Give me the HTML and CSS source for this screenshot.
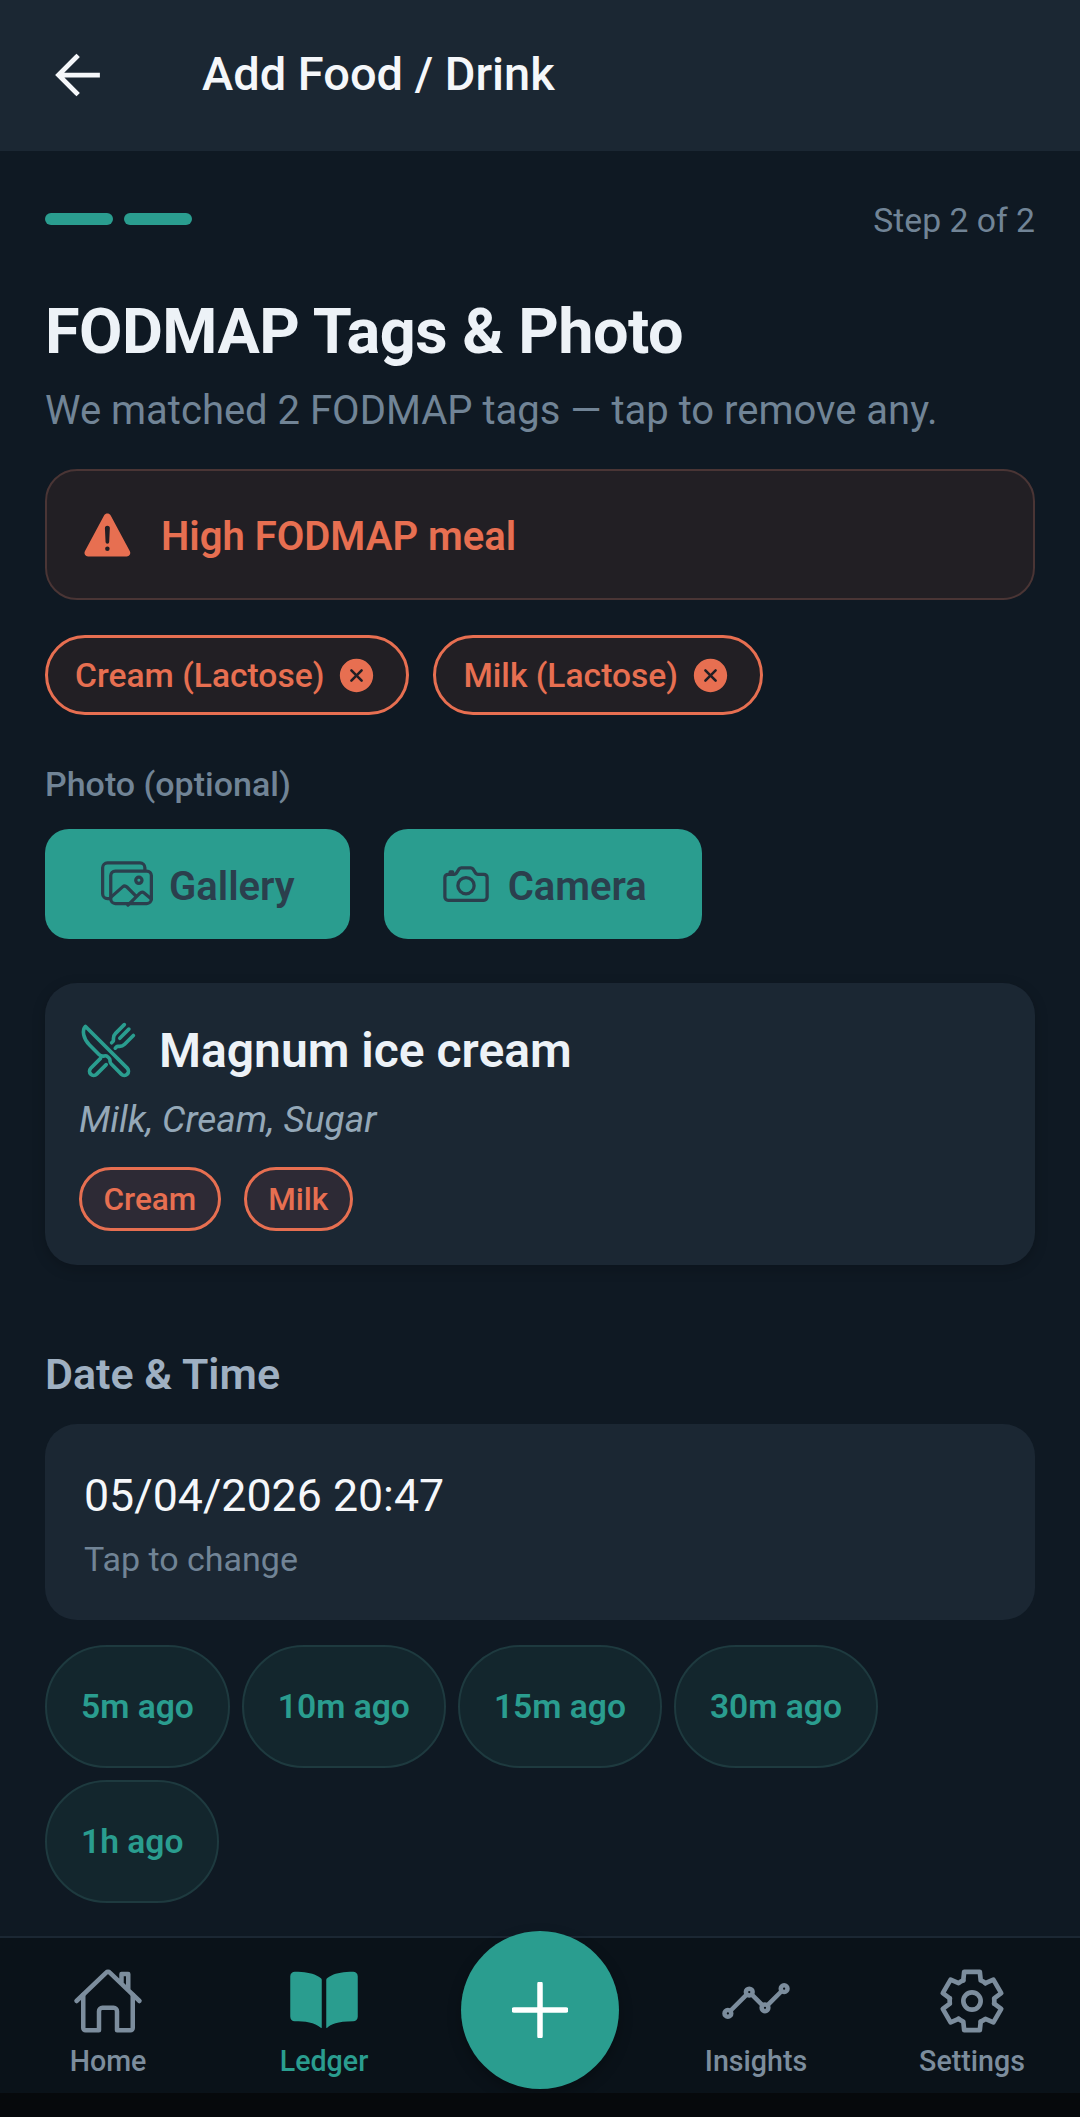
FILE: index.html
```html
<!DOCTYPE html>
<html lang="en">
<head>
    <meta charset="UTF-8">
    <meta name="viewport" content="width=device-width, initial-scale=1.0">
    <title>Add Food / Drink</title>
    <link rel="stylesheet" href="styles.css">
</head>
<body>
    <header class="topbar">
        <svg class="back-icon" viewBox="0 0 512 512"><path d="M244 400L100 256l144-144M120 256h292"/></svg>
        <h2>Add Food / Drink</h2>
    </header>

    <main class="content">
        <div class="progress-row">
            <div class="progress-bars"><span></span><span></span></div>
            <span class="step-text">Step 2 of 2</span>
        </div>

        <h1>FODMAP Tags &amp; Photo</h1>
        <p class="subtitle">We matched 2 FODMAP tags — tap to remove any.</p>

        <div class="alert">
            <svg class="alert-icon" viewBox="0 0 512 512"><path d="M449.07 399.08L278.64 82.58c-12.08-22.44-44.26-22.44-56.35 0L51.87 399.08A32 32 0 0080 446.25h340.89a32 32 0 0028.18-47.17zm-198.6-1.83a20 20 0 1120-20 20 20 0 01-20 20zm21.72-201.15l-5.74 122a16 16 0 01-32 0l-5.74-121.95a21.73 21.73 0 0121.5-22.69h.21a21.74 21.74 0 0121.73 22.7z"/></svg>
            <span>High FODMAP meal</span>
        </div>

        <div class="tag-row">
            <div class="tag">
                <span>Cream (Lactose)</span>
                <svg viewBox="0 0 512 512"><path d="M256 48C141.31 48 48 141.31 48 256s93.31 208 208 208 208-93.31 208-208S370.69 48 256 48zm75.31 260.69a16 16 0 11-22.62 22.62L256 278.63l-52.69 52.68a16 16 0 01-22.62-22.62L233.37 256l-52.68-52.69a16 16 0 0122.62-22.62L256 233.37l52.69-52.68a16 16 0 0122.62 22.62L278.63 256z"/></svg>
            </div>
            <div class="tag">
                <span>Milk (Lactose)</span>
                <svg viewBox="0 0 512 512"><path d="M256 48C141.31 48 48 141.31 48 256s93.31 208 208 208 208-93.31 208-208S370.69 48 256 48zm75.31 260.69a16 16 0 11-22.62 22.62L256 278.63l-52.69 52.68a16 16 0 01-22.62-22.62L233.37 256l-52.68-52.69a16 16 0 0122.62-22.62L256 233.37l52.69-52.68a16 16 0 0122.62 22.62L278.63 256z"/></svg>
            </div>
        </div>

        <div class="photo-label">Photo (optional)</div>
        <div class="photo-buttons">
            <button type="button">
                <svg viewBox="0 0 512 512"><path d="M432 112V96a48.14 48.14 0 00-48-48H64a48.14 48.14 0 00-48 48v256a48.14 48.14 0 0048 48h16"/><rect x="96" y="128" width="400" height="320" rx="45" ry="45"/><ellipse cx="372.92" cy="219.64" rx="30.77" ry="30.55"/><path d="M342.15 372.17L255 285.78a30.93 30.93 0 00-42.18-1.21L96 387.64M265.23 464l118.59-117.73a31 31 0 0141.46-1.87L496 402.91"/></svg>
                <span>Gallery</span>
            </button>
            <button type="button">
                <svg viewBox="0 0 512 512"><path d="M350.54 148.68l-26.62-42.06C318.31 100.08 310.62 96 302 96h-92c-8.62 0-16.31 4.08-21.92 10.62l-26.62 42.06C155.85 155.23 148.62 160 140 160H80a32 32 0 00-32 32v192a32 32 0 0032 32h352a32 32 0 0032-32V192a32 32 0 00-32-32h-59c-8.65 0-16.85-4.77-22.46-11.32z"/><circle cx="256" cy="272" r="80"/><path d="M124 158v-22h-24v22"/></svg>
                <span>Camera</span>
            </button>
        </div>

        <section class="food-card">
            <div class="food-head">
                <svg viewBox="0 0 512 512"><path d="M57.49 47.74l368.43 368.43a37.28 37.28 0 010 52.72h0a37.29 37.29 0 01-52.72 0l-90-91.55a32 32 0 01-9.2-22.43v-5.53a32 32 0 00-9.52-22.78l-11.62-10.73a32 32 0 00-29.8-7.44h0a48.53 48.53 0 01-46.56-12.63l-85.43-85.44C40.39 159.68 21.74 83.15 57.49 47.74z"/><path d="M400 32l-77.25 77.25A64 64 0 00304 154.51v14.86a16 16 0 01-4.69 11.32L288 192M320 240l11.31-11.31a16 16 0 0111.32-4.69h14.86a64 64 0 0045.26-18.75L480 128M440 72l-80 80M190 330l-86.49 86.49a37.28 37.28 0 000 52.72h0a37.29 37.29 0 0052.72 0L240 385"/></svg>
                <span>Magnum ice cream</span>
            </div>
            <p class="ingredients">Milk, Cream, Sugar</p>
            <div class="food-tags">
                <span>Cream</span>
                <span>Milk</span>
            </div>
        </section>

        <div class="section-title">Date &amp; Time</div>
        <div class="date-card">
            <div class="date-value">05/04/2026 20:47</div>
            <div class="date-hint">Tap to change</div>
        </div>

        <div class="quick-times">
            <span>5m ago</span>
            <span>10m ago</span>
            <span>15m ago</span>
            <span>30m ago</span>
            <span>1h ago</span>
        </div>
    </main>

    <nav class="bottom-nav">
        <a class="nav-item">
            <svg viewBox="0 0 512 512"><path d="M80 212v236a16 16 0 0016 16h96V328a24 24 0 0124-24h80a24 24 0 0124 24v136h96a16 16 0 0016-16V212"/><path d="M480 256L266.89 52c-5-5.28-16.69-5.34-21.78 0L32 256M400 179V64h-48v69"/></svg>
            Home
        </a>
        <a class="nav-item active">
            <svg viewBox="0 0 512 512"><path d="M202.24 74C166.11 56.75 115.61 48.3 48 48a31.36 31.36 0 00-17.92 5.33A32 32 0 0016 79.9v286c0 19.34 13.76 33.93 32 33.93 71.07 0 142.36 6.64 185.06 47a4.11 4.11 0 006.94-3V106.82a15.89 15.89 0 00-5.46-12A143 143 0 00202.24 74zM481.92 53.3A31.33 31.33 0 00464 48c-67.61.3-118.11 8.71-154.24 26a143.31 143.31 0 00-32.31 20.78 15.93 15.93 0 00-5.45 12v337.13a3.93 3.93 0 006.68 2.81c25.67-25.5 70.72-46.82 185.36-46.81a32 32 0 0032-32v-288a32 32 0 00-14.12-26.61z"/></svg>
            Ledger
        </a>
        <div class="fab">
            <svg viewBox="0 0 56 56"><path d="M28 2v52M2 28h52"/></svg>
        </div>
        <a class="nav-item">
            <svg viewBox="0 0 512 512"><path d="M344 280l88-88M232 216l64 64M80 320l104-104"/><circle cx="456" cy="168" r="24"/><circle cx="320" cy="304" r="24"/><circle cx="208" cy="192" r="24"/><circle cx="56" cy="344" r="24"/></svg>
            Insights
        </a>
        <a class="nav-item">
            <svg class="gear" viewBox="0 0 100 100">
                <path id="gearTooth" d="M37.89 21.46L39.13 9.43H60.87L62.11 21.46A31 31 0 0 1 68.66 25.24"/>
                <use href="#gearTooth" transform="rotate(60 50 50)"/>
                <use href="#gearTooth" transform="rotate(120 50 50)"/>
                <use href="#gearTooth" transform="rotate(180 50 50)"/>
                <use href="#gearTooth" transform="rotate(240 50 50)"/>
                <use href="#gearTooth" transform="rotate(300 50 50)"/>
                <circle cx="50" cy="50" r="12"/>
            </svg>
            Settings
        </a>
    </nav>
    <div class="system-strip"></div>
</body>
</html>
```

FILE: styles.css
```css
* {
    box-sizing: border-box;
}

body {
    font-family: 'Roboto', sans-serif;
    background-color: #0f1923;
    color: #edf2f7;
    display: flex;
    flex-direction: column;
    height: 2117px;
    margin: 0;
    overflow: hidden;
}

.topbar {
    height: 151px;
    flex-shrink: 0;
    background-color: #1b2733;
    display: flex;
    align-items: center;
    gap: 92px;
    padding: 0 0 4px 46px;
}

.topbar h2 {
    margin: 0;
    font-size: 47px;
    font-weight: 500;
    color: #f5f7fa;
}

.back-icon {
    width: 64px;
    height: 64px;
    margin-top: 2px;
    fill: none;
    stroke: #f5f7fa;
    stroke-width: 38;
    stroke-linecap: square;
}

.content {
    flex: 1;
    padding: 48px 45px 0;
}

.progress-row {
    display: flex;
    justify-content: space-between;
    align-items: center;
    height: 40px;
}

.progress-bars {
    display: flex;
    gap: 11px;
}

.progress-bars span {
    width: 68px;
    height: 12px;
    border-radius: 6px;
    background-color: #2a9d8f;
}

.step-text {
    font-size: 33.7px;
    padding-top: 2px;
    color: #718496;
}

h1 {
    margin: 55px 0 0;
    font-size: 63px;
    line-height: 76px;
    font-weight: 700;
    letter-spacing: -0.55px;
}

.subtitle {
    margin: 18px 0 0;
    font-size: 40px;
    line-height: 46px;
    color: #718496;
}

.alert {
    margin-top: 35px;
    height: 131px;
    display: flex;
    align-items: center;
    gap: 24px;
    padding-left: 32px;
    background-color: #221f24;
    border: 2px solid #4a3535;
    border-radius: 32px;
    color: #e76f51;
    font-size: 40px;
    font-weight: 600;
}

.alert span {
    padding-top: 3px;
}

.alert-icon {
    width: 58px;
    height: 58px;
    fill: #e76f51;
}

.tag-row {
    margin-top: 35px;
    display: flex;
    gap: 24px;
}

.tag {
    height: 80px;
    display: flex;
    align-items: center;
    gap: 12px;
    padding: 0 29px 0 27px;
    background-color: #221f24;
    border: 3px solid #e76f51;
    border-radius: 40px;
    color: #e76f51;
    font-size: 33.6px;
    font-weight: 500;
}

.tag svg {
    width: 41px;
    height: 41px;
    fill: #e76f51;
}

.photo-label {
    margin-top: 49px;
    font-size: 34px;
    line-height: 40px;
    font-weight: 500;
    color: #718496;
}

.photo-buttons {
    margin-top: 25px;
    display: flex;
    gap: 34px;
}

.photo-buttons button {
    height: 110px;
    display: flex;
    align-items: center;
    gap: 16px;
    padding: 0 55px 0 56px;
    background-color: #2a9d8f;
    border: none;
    border-radius: 24px;
    font-family: inherit;
    font-size: 40px;
    font-weight: 600;
    color: #2b3f4d;
}

.photo-buttons span {
    padding-top: 4px;
}

.photo-buttons svg {
    width: 52px;
    height: 52px;
    fill: none;
    stroke: #2b3f4d;
    stroke-width: 32;
    stroke-linecap: round;
    stroke-linejoin: round;
}

.food-card {
    margin-top: 44px;
    height: 282px;
    padding: 38px 34px 0;
    background-color: #1b2733;
    border-radius: 32px;
    box-shadow: 0 4px 14px rgba(0, 0, 0, 0.2);
}

.food-head {
    display: flex;
    align-items: center;
    gap: 22px;
    font-size: 48px;
    font-weight: 600;
}

.food-head svg {
    width: 58px;
    height: 58px;
    fill: none;
    stroke: #2a9d8f;
    stroke-width: 32;
    stroke-linecap: round;
    stroke-linejoin: round;
}

.ingredients {
    margin: 19px 0 0;
    font-size: 37px;
    line-height: 44px;
    font-style: italic;
    color: #94a8b8;
}

.food-tags {
    margin-top: 25px;
    display: flex;
    gap: 23px;
}

.food-tags span {
    height: 64px;
    display: flex;
    align-items: center;
    padding: 0 21.5px;
    background-color: #2d2a35;
    border: 3px solid #e76f51;
    border-radius: 32px;
    color: #e76f51;
    font-size: 31.5px;
    font-weight: 500;
}

.section-title {
    margin-top: 84px;
    font-size: 43px;
    line-height: 50px;
    font-weight: 600;
    color: #9fb0c2;
}

.date-card {
    margin-top: 25px;
    height: 196px;
    padding: 47px 39px 0;
    background-color: #1b2733;
    border-radius: 32px;
}

.date-value {
    font-size: 44.7px;
    line-height: 50px;
    color: #f5f7fa;
}

.date-hint {
    margin-top: 18px;
    font-size: 34px;
    line-height: 40px;
    color: #718496;
}

.quick-times {
    margin-top: 25px;
    display: flex;
    flex-wrap: wrap;
    gap: 12px;
}

.quick-times span {
    height: 123px;
    display: flex;
    align-items: center;
    padding: 0 34px;
    background-color: #13262d;
    border: 2px solid #1e3a3f;
    border-radius: 62px;
    color: #2a9d8f;
    font-size: 33.6px;
    font-weight: 600;
}

.bottom-nav {
    height: 157px;
    flex-shrink: 0;
    display: grid;
    grid-template-columns: repeat(5, 1fr);
    background-color: #0a1219;
    border-top: 2px solid #1b2733;
}

.nav-item {
    display: flex;
    flex-direction: column;
    align-items: center;
    gap: 6px;
    padding-top: 27px;
    font-size: 28.6px;
    line-height: 36px;
    font-weight: 500;
    color: #7c8d9d;
}

.nav-item svg {
    width: 72px;
    height: 72px;
    fill: none;
    stroke: #7c8d9d;
    stroke-width: 32;
    stroke-linecap: round;
    stroke-linejoin: round;
}

.nav-item svg.gear {
    stroke-width: 6.5;
}

.nav-item.active {
    color: #2a9d8f;
}

.nav-item.active svg {
    fill: #2a9d8f;
    stroke: none;
}

.fab {
    width: 158px;
    height: 158px;
    margin-top: -7px;
    justify-self: center;
    display: flex;
    align-items: center;
    justify-content: center;
    background-color: #2a9d8f;
    border-radius: 50%;
    box-shadow: 0 6px 14px rgba(0, 0, 0, 0.25);
}

.fab svg {
    width: 56px;
    height: 56px;
    fill: none;
    stroke: #fff;
    stroke-width: 5.5;
    stroke-linecap: round;
}

.system-strip {
    height: 24px;
    flex-shrink: 0;
    background-color: #06090c;
}
```
